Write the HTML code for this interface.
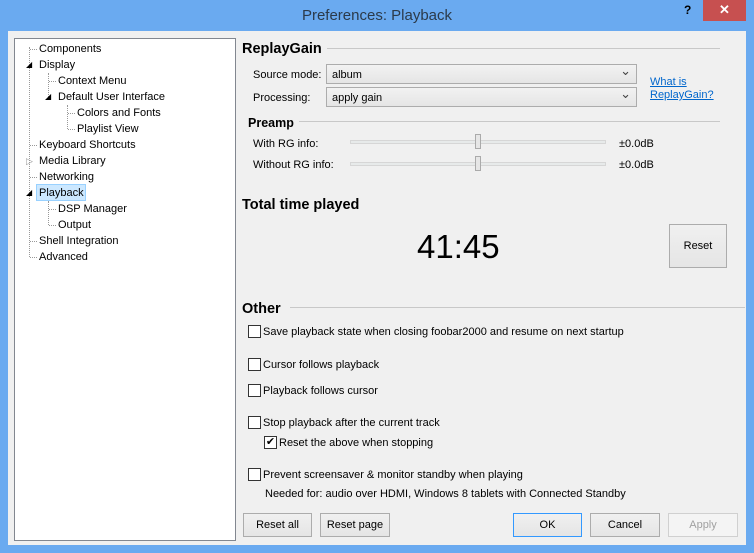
<!DOCTYPE html>
<html><head><style>
*{margin:0;padding:0;box-sizing:border-box}
body{width:754px;height:553px;background:#6aaaf0;position:relative;overflow:hidden;font-family:"Liberation Sans",sans-serif;font-size:11px;color:#000}
.a{position:absolute;white-space:nowrap}
#title{left:0;width:754px;top:7px;text-align:center;font-size:15px;color:#2b3a4a}
#close{left:703px;top:0;width:43px;height:21px;background:#c75050;color:#fff;text-align:center;font-size:13px;line-height:20px;font-weight:bold}
#q{left:684px;top:3px;font-weight:bold;font-size:12px;color:#000}
#client{left:8px;top:31px;width:738px;height:514px;background:#f0f0f0}
#tree{left:14px;top:38px;width:222px;height:503px;background:#fff;border:1px solid #828790}
.t{position:absolute;white-space:nowrap;font-size:11px;margin-top:1px}
.h{font-weight:bold;font-size:14.5px}
.line{position:absolute;height:1px;background:#c8c8c8}
.combo{position:absolute;height:20px;border:1px solid #acacac;background:linear-gradient(#f2f2f2,#e5e5e5);padding:4px 5px 0;font-size:11px}
.combo:after{content:"⌄";position:absolute;right:5px;top:-2px;font-size:13px;color:#444}
.btn{position:absolute;height:24px;border:1px solid #acacac;background:linear-gradient(#f0f0f0,#e5e5e5);text-align:center;line-height:23px;font-size:11px}
.cb{position:absolute;width:13px;height:13px;border:1px solid #333;background:#fff}
.dot{position:absolute;border-left:1px dotted #999}
.dh{position:absolute;border-top:1px dotted #999}
a{color:#0066cc;text-decoration:underline}
</style></head><body>
<div class="a" id="title">Preferences: Playback</div>
<div class="a" id="q">?</div>
<div class="a" id="close">✕</div>
<div class="a" id="client"></div>
<div class="a" id="tree"></div>

<div class="dot" style="left:29px;top:47px;height:210px"></div>
<div class="dh" style="left:30px;top:49px;width:7px"></div>
<div class="dh" style="left:30px;top:145px;width:7px"></div>
<div class="dh" style="left:30px;top:177px;width:7px"></div>
<div class="dh" style="left:30px;top:241px;width:7px"></div>
<div class="dh" style="left:30px;top:257px;width:7px"></div>
<div class="dot" style="left:48px;top:73px;height:24px"></div>
<div class="dh" style="left:49px;top:81px;width:7px"></div>
<div class="dot" style="left:67px;top:105px;height:24px"></div>
<div class="dh" style="left:68px;top:113px;width:7px"></div>
<div class="dh" style="left:68px;top:129px;width:7px"></div>
<div class="dot" style="left:48px;top:201px;height:24px"></div>
<div class="dh" style="left:49px;top:209px;width:7px"></div>
<div class="dh" style="left:49px;top:225px;width:7px"></div>
<div class="t" style="left:26px;top:59px;font-size:8px">◢</div>
<div class="t" style="left:45px;top:91px;font-size:8px">◢</div>
<div class="t" style="left:26px;top:187px;font-size:8px">◢</div>
<div class="t" style="left:26px;top:155px;font-size:9px;color:#999">▷</div>
<div class="t" style="left:39px;top:42px">Components</div>
<div class="t" style="left:39px;top:58px">Display</div>
<div class="t" style="left:58px;top:74px">Context Menu</div>
<div class="t" style="left:58px;top:90px">Default User Interface</div>
<div class="t" style="left:77px;top:106px">Colors and Fonts</div>
<div class="t" style="left:77px;top:122px">Playlist View</div>
<div class="t" style="left:39px;top:138px">Keyboard Shortcuts</div>
<div class="t" style="left:39px;top:154px">Media Library</div>
<div class="t" style="left:39px;top:170px">Networking</div>
<div class="a" style="left:36px;top:184px;width:50px;height:17px;background:#cce8ff;border:1px solid #99d1ff"></div>
<div class="t" style="left:39px;top:186px">Playback</div>
<div class="t" style="left:58px;top:202px">DSP Manager</div>
<div class="t" style="left:58px;top:218px">Output</div>
<div class="t" style="left:39px;top:234px">Shell Integration</div>
<div class="t" style="left:39px;top:250px">Advanced</div>

<div class="t h" style="left:242px;top:40px">ReplayGain</div>
<div class="line" style="left:327px;top:48px;width:393px"></div>
<div class="t" style="left:253px;top:68px">Source mode:</div>
<div class="combo" style="left:326px;top:64px;width:311px">album</div>
<div class="t" style="left:253px;top:91px">Processing:</div>
<div class="combo" style="left:326px;top:87px;width:311px">apply gain</div>
<div class="t" style="left:650px;top:75px"><a>What is</a></div>
<div class="t" style="left:650px;top:88px"><a>ReplayGain?</a></div>
<div class="t" style="left:248px;top:115px;font-weight:bold;font-size:12.5px">Preamp</div>
<div class="line" style="left:299px;top:121px;width:421px"></div>
<div class="t" style="left:253px;top:137px">With RG info:</div>
<div class="t" style="left:253px;top:158px">Without RG info:</div>
<div class="a" style="left:350px;top:140px;width:256px;height:4px;background:#e7eaea;border:1px solid #d6d6d6"></div>
<div class="a" style="left:350px;top:162px;width:256px;height:4px;background:#e7eaea;border:1px solid #d6d6d6"></div>
<div class="a" style="left:475px;top:134px;width:6px;height:15px;background:#e6e6e6;border:1px solid #aaa"></div>
<div class="a" style="left:475px;top:156px;width:6px;height:15px;background:#e6e6e6;border:1px solid #aaa"></div>
<div class="t" style="left:619px;top:137px">±0.0dB</div>
<div class="t" style="left:619px;top:158px">±0.0dB</div>

<div class="t h" style="left:242px;top:196px">Total time played</div>
<div class="t" style="left:417px;top:227px;font-size:33px">41:45</div>
<div class="btn" style="left:669px;top:224px;width:58px;height:44px;line-height:42px">Reset</div>

<div class="t h" style="left:242px;top:300px">Other</div>
<div class="line" style="left:290px;top:307px;width:455px"></div>
<div class="cb" style="left:248px;top:325px"></div><div class="t" style="left:263px;top:325px">Save playback state when closing foobar2000 and resume on next startup</div>
<div class="cb" style="left:248px;top:358px"></div><div class="t" style="left:263px;top:358px">Cursor follows playback</div>
<div class="cb" style="left:248px;top:384px"></div><div class="t" style="left:263px;top:384px">Playback follows cursor</div>
<div class="cb" style="left:248px;top:416px"></div><div class="t" style="left:263px;top:416px">Stop playback after the current track</div>
<div class="cb" style="left:264px;top:436px;font-size:11px;line-height:10px;text-align:center">✔</div><div class="t" style="left:279px;top:436px">Reset the above when stopping</div>
<div class="cb" style="left:248px;top:468px"></div><div class="t" style="left:263px;top:468px">Prevent screensaver &amp; monitor standby when playing</div>
<div class="t" style="left:265px;top:487px">Needed for: audio over HDMI, Windows 8 tablets with Connected Standby</div>

<div class="btn" style="left:243px;top:513px;width:69px">Reset all</div>
<div class="btn" style="left:320px;top:513px;width:70px">Reset page</div>
<div class="btn" style="left:513px;top:513px;width:69px;border-color:#3399ff">OK</div>
<div class="btn" style="left:590px;top:513px;width:70px">Cancel</div>
<div class="btn" style="left:668px;top:513px;width:70px;color:#a0a0a0;border-color:#d0d0d0;background:#f4f4f4">Apply</div>
</body></html>
